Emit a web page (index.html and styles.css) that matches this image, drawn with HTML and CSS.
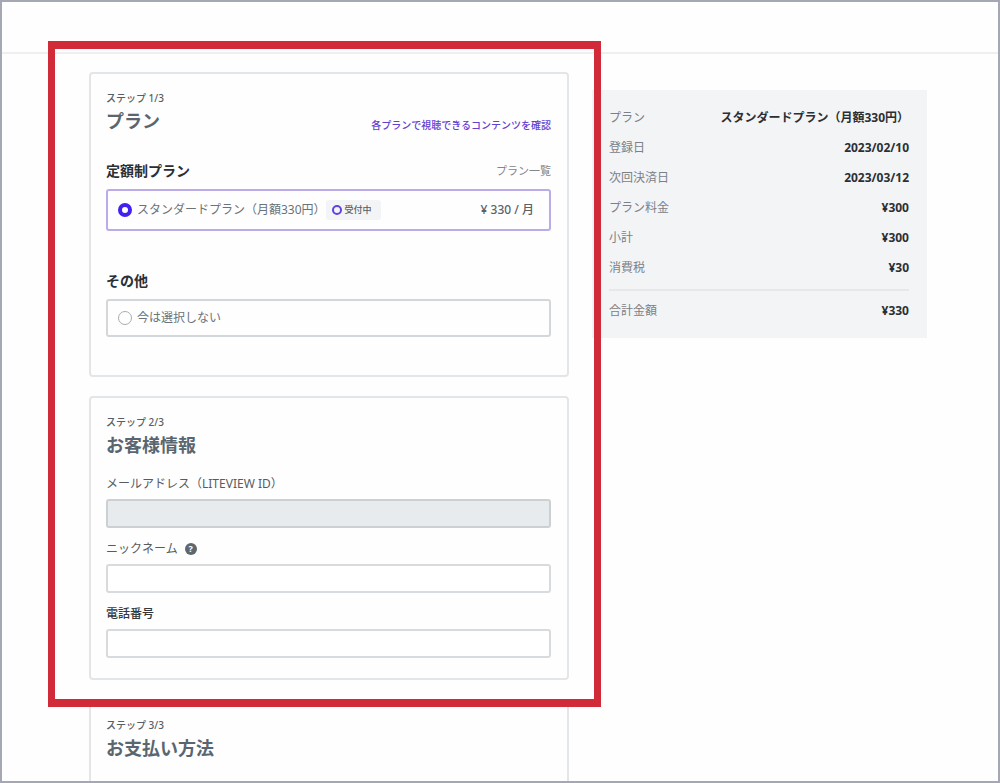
FILE: index.html
```html
<!DOCTYPE html>
<html lang="ja">
<head>
    <meta charset="UTF-8">
    <meta name="viewport" content="width=device-width, initial-scale=1.0">
    <title>プラン申し込み</title>
    <link rel="stylesheet" href="styles.css">
</head>
<body>
    <div class="page">
        <header class="header"></header>
        <main class="main">
            <form class="steps">
                <div class="highlight">
                    <section class="card card-plan">
                        <p class="step">ステップ 1/3</p>
                        <div class="row title-row">
                            <h2 class="title">プラン</h2>
                            <a href="#" class="contents-link">各プランで視聴できるコンテンツを確認</a>
                        </div>
                        <div class="row group-head">
                            <h3 class="group-title">定額制プラン</h3>
                            <a href="#" class="list-link">プラン一覧</a>
                        </div>
                        <div class="option selected">
                            <input type="radio" class="radio" name="plan" id="planStandard" checked>
                            <label for="planStandard">スタンダードプラン（月額330円）</label>
                            <span class="badge">受付中</span>
                            <span class="price">¥ 330 / 月</span>
                        </div>
                        <div class="row group-head other">
                            <h3 class="group-title">その他</h3>
                        </div>
                        <div class="option">
                            <input type="radio" class="radio" name="plan" id="planNone">
                            <label for="planNone">今は選択しない</label>
                        </div>
                    </section>

                    <section class="card card-customer">
                        <p class="step">ステップ 2/3</p>
                        <h2 class="title">お客様情報</h2>
                        <div class="fields">
                            <div class="field">
                                <label for="email">メールアドレス（LITEVIEW ID）</label>
                                <input type="email" class="text-input" id="email" disabled>
                            </div>
                            <div class="field">
                                <div class="label-row">
                                    <label for="nickname">ニックネーム</label>
                                    <button type="button" class="help">?</button>
                                </div>
                                <input type="text" class="text-input" id="nickname">
                            </div>
                            <div class="field">
                                <label for="tel" class="strong">電話番号</label>
                                <input type="tel" class="text-input" id="tel">
                            </div>
                        </div>
                    </section>
                </div>

                <section class="card card-payment">
                    <p class="step">ステップ 3/3</p>
                    <h2 class="title">お支払い方法</h2>
                </section>
            </form>

            <aside class="summary">
                <dl class="summary-list">
                    <div class="summary-row"><dt>プラン</dt><dd>スタンダードプラン（月額330円）</dd></div>
                    <div class="summary-row"><dt>登録日</dt><dd>2023/02/10</dd></div>
                    <div class="summary-row"><dt>次回決済日</dt><dd>2023/03/12</dd></div>
                    <div class="summary-row"><dt>プラン料金</dt><dd>¥300</dd></div>
                    <div class="summary-row"><dt>小計</dt><dd>¥300</dd></div>
                    <div class="summary-row"><dt>消費税</dt><dd>¥30</dd></div>
                    <div class="summary-row total"><dt>合計金額</dt><dd>¥330</dd></div>
                </dl>
            </aside>
        </main>
    </div>
</body>
</html>
```
FILE: styles.css
```css
*,
*::before,
*::after {
    box-sizing: border-box;
}

body {
    margin: 0;
    font-family: "Noto Sans", "Noto Sans CJK JP", sans-serif;
    font-size: 12px;
    line-height: 16px;
    color: #6b7278;
    background: #fefefe;
}

h2, h3, p, dl, dd {
    margin: 0;
}

a {
    text-decoration: none;
}

.page {
    height: 100vh;
    overflow: hidden;
    border: 2px solid #a5a8b2;
}

.header {
    height: 52px;
    border-bottom: 2px solid #efeff0;
}

.main {
    display: grid;
    grid-template-columns: 480fr 335fr;
    align-items: start;
    gap: 23px;
    padding: 18px 71px 0 87px;
}

.steps,
.highlight {
    display: flex;
    flex-direction: column;
    gap: 19px;
}

/* Red frame round steps 1 and 2 */
.highlight {
    position: relative;
}

.highlight::after {
    content: "";
    position: absolute;
    inset: -31px -32px -27px -41px;
    border: 8px solid #d12a38;
    border-width: 8px 7px;
    pointer-events: none;
    z-index: 1;
}

.card {
    padding: 17px 16px 20px 15px;
    border: 2px solid #e3e6e8;
    border-radius: 4px;
}

.card-plan {
    padding-bottom: 38px;
}

.card-payment {
    padding-bottom: 60px;
}

.step {
    font-size: 10px;
    font-weight: 500;
    line-height: 14px;
    color: #565f66;
}

.title {
    margin-top: 4px;
    font-size: 18px;
    font-weight: 600;
    line-height: 24px;
    color: #5a666f;
}

.row {
    display: flex;
    align-items: center;
    justify-content: space-between;
}

.title-row {
    align-items: flex-end;
}

.contents-link {
    font-size: 10px;
    font-weight: 500;
    color: #6340d0;
}

.group-head {
    margin: 28px 0 8px;
}

.group-head.other {
    margin-top: 40px;
}

.group-title {
    font-size: 14px;
    font-weight: 600;
    line-height: 20px;
    color: #2b2f33;
}

.list-link {
    font-size: 11px;
    color: #81878c;
}

.option {
    display: flex;
    align-items: center;
    height: 38px;
    padding: 0 15px 0 10px;
    border: 2px solid #d3d7d9;
    border-radius: 3px;
}

.option.selected {
    height: 42px;
    border-color: #bbabe9;
}

.radio {
    appearance: none;
    width: 14px;
    height: 14px;
    margin: 0 5px 0 0;
    border: 1px solid #a9adb0;
    border-radius: 50%;
    background: #fff;
}

.radio:checked {
    border: 4px solid #4220f0;
}

.badge {
    display: flex;
    align-items: center;
    gap: 3px;
    height: 20px;
    padding: 0 9px 0 6px;
    border-radius: 3px;
    font-size: 9px;
    font-weight: 500;
    color: #565f66;
    background: #f3f4f6;
}

.badge::before {
    content: "";
    width: 10px;
    height: 10px;
    border: 2px solid #6340e0;
    border-radius: 50%;
}

.price {
    margin-left: auto;
    font-weight: 500;
    color: #5a6268;
}

.fields {
    display: grid;
    gap: 13px;
    margin-top: 19px;
}

.field {
    display: grid;
    gap: 7px;
}

.field label {
    color: #565c61;
}

.field .strong {
    font-weight: 500;
    color: #33383c;
}

.label-row {
    display: flex;
    align-items: center;
    gap: 7px;
}

.help {
    width: 12px;
    height: 12px;
    padding: 0;
    border: none;
    border-radius: 50%;
    font-family: inherit;
    font-size: 9px;
    font-weight: 700;
    line-height: 12px;
    color: #fff;
    background: #5d676d;
}

.text-input {
    width: 100%;
    height: 29px;
    padding: 0 8px;
    border: 2px solid #d7dbde;
    border-radius: 3px;
    font: inherit;
    background: #fff;
}

.text-input:disabled {
    border-color: #cbd0d3;
    background: #e8ebee;
}

.summary {
    margin-top: 18px;
    padding: 13px 18px 12px 17px;
    background: #f3f4f6;
}

.summary-row {
    display: flex;
    justify-content: space-between;
    line-height: 30px;
}

.summary-row dt {
    color: #7b8186;
}

.summary-row dd {
    font-weight: 700;
    color: #2b2f33;
}

.summary-row.total {
    margin-top: 6px;
    padding-top: 5px;
    border-top: 2px solid #e6e8ea;
}

@media (max-width: 800px) {
    .main {
        grid-template-columns: 1fr;
        padding: 18px 48px;
    }
}
```
